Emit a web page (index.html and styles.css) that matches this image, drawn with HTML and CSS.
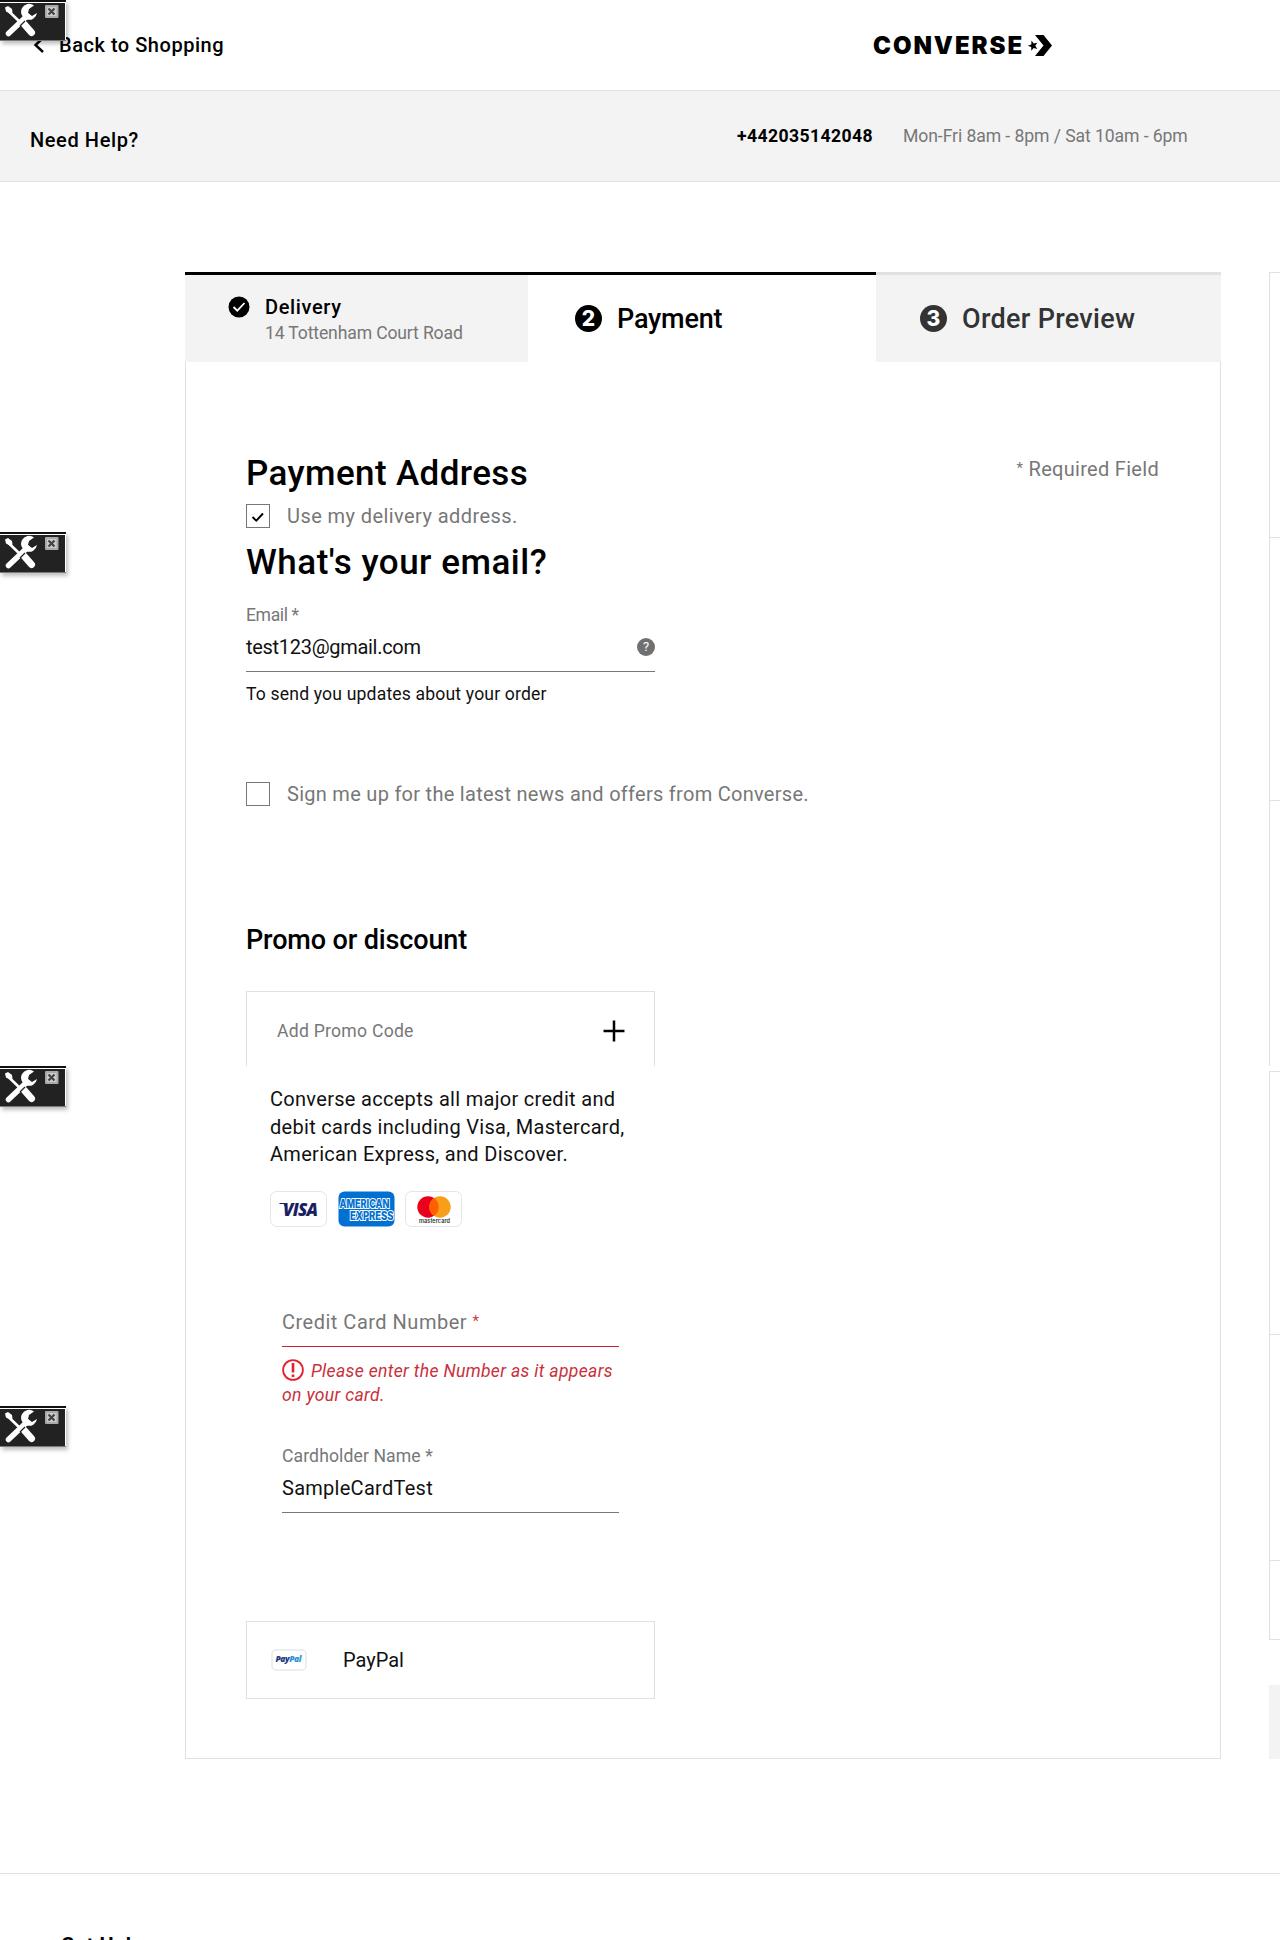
FILE: index.html
```html
<!DOCTYPE html>
<html lang="en">
<head>
<meta charset="utf-8">
<title>Converse Checkout</title>
<link rel="stylesheet" href="styles.css">
</head>
<body>
<svg class="defs" aria-hidden="true">
  <symbol id="tools" viewBox="0 0 66 41">
    <rect width="66" height="41" fill="#fff"/>
    <rect width="66" height="2" fill="#111"/>
    <rect y="3" width="65" height="37" fill="#222"/>
    <rect y="40.4" width="66" height=".6" fill="#222"/>
    <path d="M7 9.500 22 24" stroke="#fff" stroke-width="2.600"/>
    <path d="M5 7.500 8 6l4 3 .5 3.500-2.500 1L6 11.500z" fill="#fff"/>
    <path d="M24.500 24.500 31.500 32.500" stroke="#fff" stroke-width="7" stroke-linecap="round"/>
    <path d="M8.500 33.500 27 16" stroke="#fff" stroke-width="5.500" stroke-linecap="round"/>
    <path d="M34 5.500A8 8 0 1 0 37 13l-5 3-4-3 1-4z" fill="#fff"/>
    <path d="m20 26 5-5" stroke="#222" stroke-width="1.200"/>
    <rect x="45" y="5" width="13.500" height="13" rx="1" fill="#aaa"/>
    <rect x="47" y="7" width="9.500" height="9" fill="#ccc"/>
    <path d="m48.500 8.500 6 6m0-6-6 6" stroke="#444" stroke-width="2.200"/>
  </symbol>
</svg>

<header class="header">
  <a class="back">
    <svg class="back-arrow" viewBox="0 0 12 18"><path d="M10 2 2.500 9 10 16" fill="none" stroke="#000" stroke-width="2.400"/></svg>
    <span>Back to Shopping</span>
  </a>
  <div class="logo">
    <span class="logo-word">CONVERSE</span>
    <svg class="logo-mark" viewBox="0 0 26 22">
      <path d="M8 0h8.500L25 10.500 16.500 21H8l8.500-10.500z"/>
      <path d="m4.500 5.500 2.200 3 3.600-.7-2 3 2 3.200-3.600-.9-2.400 2.700-.1-3.700L.8 10.800l3.500-1.400z"/>
    </svg>
  </div>
</header>

<section class="help">
  <h2 class="help-title">Need Help?</h2>
  <span class="phone">+442035142048</span>
  <span class="hours">Mon-Fri 8am - 8pm / Sat 10am - 6pm</span>
</section>

<div class="checkout">
  <main class="main">
    <nav class="steps">
      <div class="step done">
        <svg class="step-check" viewBox="0 0 22 22"><circle cx="11" cy="11" r="10.500"/><path d="m5.500 11 3.800 3.700L16.500 7" fill="none" stroke="#fff" stroke-width="1.800"/></svg>
        <div>
          <div class="step-name">Delivery</div>
          <div class="step-detail">14 Tottenham Court Road</div>
        </div>
      </div>
      <div class="step current"><span class="num">2</span><span>Payment</span></div>
      <div class="step next"><span class="num">3</span><span>Order Preview</span></div>
    </nav>

    <div class="panel">
      <div class="panel-head">
        <h1 class="title title-address">Payment Address</h1>
        <span class="required"><span class="mark">*</span> Required Field</span>
      </div>
      <label class="check check-address">
        <span class="box"><svg viewBox="0 0 22 22"><path d="m5.500 12 3.800 3.700L16 8.500" fill="none" stroke="#000" stroke-width="1.900"/></svg></span>
        <span class="check-text">Use my delivery address.</span>
      </label>
      <h1 class="title title-email">What's your email?</h1>

      <div class="field email">
        <div class="label label-email">Email *</div>
        <div class="value"><span class="email-text">test123@gmail.com</span><span class="hint">?</span></div>
      </div>
      <p class="note">To send you updates about your order</p>
      <label class="check check-news">
        <span class="box"></span>
        <span class="check-text">Sign me up for the latest news and offers from Converse.</span>
      </label>

      <h2 class="promo-title">Promo or discount</h2>
      <div class="promo">
        <span>Add Promo Code</span>
        <svg class="plus" viewBox="0 0 22 22"><path d="M11 .5v21M.5 11h21" stroke="#000" stroke-width="2.500"/></svg>
      </div>

      <p class="accepts">Converse accepts all major credit and<br>debit cards including Visa, Mastercard,<br>American Express, and Discover.</p>
      <div class="cards">
        <svg class="card" viewBox="0 0 57 36">
          <rect x=".5" y=".5" width="56" height="35" rx="6" fill="#fff" stroke="#e4e4ea"/>
          <path d="M9.500 12.500h4.500l2 4" fill="none" stroke="#1a1f62" stroke-width="1.200"/>
          <text class="visa" x="13" y="25" textLength="35">VISA</text>
        </svg>
        <svg class="card" viewBox="0 0 57 36">
          <rect x=".5" y=".5" width="56" height="35" rx="6" fill="#0070d1"/>
          <text class="amex" x="1.500" y="16.500" textLength="50" lengthAdjust="spacingAndGlyphs">AMERICAN</text>
          <text class="amex" x="12" y="29" textLength="43.500" lengthAdjust="spacingAndGlyphs">EXPRESS</text>
        </svg>
        <svg class="card" viewBox="0 0 57 36">
          <rect x=".5" y=".5" width="56" height="35" rx="6" fill="#fff" stroke="#e4e4ea"/>
          <circle cx="23" cy="16" r="10.700" fill="#eb001b"/>
          <circle cx="35" cy="16" r="10.700" fill="#f79e1b"/>
          <path d="M29 7.100a10.700 10.700 0 0 1 0 17.800 10.700 10.700 0 0 1 0-17.800z" fill="#ff5f00"/>
          <text class="mc" x="14" y="31.500" textLength="31">mastercard</text>
        </svg>
      </div>

      <div class="card-form">
        <div class="field number">
          <div class="value"><span class="number-text">Credit Card Number <span class="mark star">*</span></span></div>
        </div>
        <p class="error"><svg class="alert" viewBox="0 0 22 22"><circle cx="11" cy="11" r="9.900" fill="none" stroke="#e5202b" stroke-width="1.800"/><path d="M11 4v9.500M11 15.500V18" stroke="#e5202b" stroke-width="2.600"/></svg><span>Please enter the Number as it appears</span><br>on your card.</p>
        <div class="field holder">
          <div class="label">Cardholder Name *</div>
          <div class="value"><span class="holder-text">SampleCardTest</span></div>
        </div>
      </div>

      <div class="paypal">
        <svg class="paypal-badge" viewBox="0 0 36 22">
          <rect x="1" y="1" width="34" height="20" rx="4" fill="#fff" stroke="#e8e9ee" stroke-width="1.500"/>
          <text class="pp" x="4.500" y="13" textLength="26"><tspan fill="#253b80">Pay</tspan><tspan fill="#2f94d8">Pal</tspan></text>
        </svg>
        <span>PayPal</span>
      </div>
    </div>
  </main>

  <aside class="summary">
    <div class="sum s1"></div>
    <div class="sum s2"></div>
    <div class="sum s3"></div>
    <div class="sum s4"></div>
    <div class="sum s5"></div>
    <div class="sum s6"></div>
    <div class="sum-block"></div>
  </aside>
</div>

<footer class="footer"><h3 class="footer-title">Get Help</h3></footer>

<svg class="widget w1"><use href="#tools"/></svg>
<svg class="widget w2"><use href="#tools"/></svg>
<svg class="widget w3"><use href="#tools"/></svg>
<svg class="widget w4"><use href="#tools"/></svg>
</body>
</html>
```
FILE: styles.css
```css
* { box-sizing: border-box; }
html, body { height: 1940px; overflow: hidden; }
body {
  margin: 0;
  position: relative;
  background: #fff;
  color: #111;
  font: 400 20px/24px Roboto, "Liberation Sans", sans-serif;
}
h1, h2, h3, p { margin: 0; font-weight: 500; }
svg { display: block; flex: none; }
.defs { position: absolute; width: 0; height: 0; }

.header { height: 90px; display: flex; align-items: flex-start; color: #000; }
.back { display: flex; width: 873px; padding: 33px 0 0 33px; font-weight: 500; letter-spacing: .53px; }
.back-arrow { width: 12px; height: 18px; margin: 3px 14px 0 0; }
.logo { display: flex; padding-top: 35px; }
.logo-word { width: 154px; font: 900 24px/22px Inter, sans-serif; letter-spacing: 1.950px; }
.logo-mark { width: 26px; height: 22px; }

.help {
  height: 92px;
  display: flex;
  align-items: flex-start;
  padding-left: 30px;
  background: #f3f3f3;
  border-top: 1px solid #e1e1e1;
  border-bottom: 1px solid #e1e1e1;
  font-size: 17.600px;
}
.help-title { width: 707px; padding-top: 37px; color: #000; font-size: 20px; line-height: 24px; letter-spacing: .6px; }
.phone { width: 166px; padding-top: 33px; color: #000; font-weight: 700; letter-spacing: .4px; }
.hours { padding-top: 33px; color: #777; letter-spacing: -.08px; }

.checkout { display: flex; gap: 48px; margin: 90px 0 0 185px; }
.main { width: 1036px; flex: none; }
.steps { display: grid; grid-template-columns: 343px 348px 345px; height: 90px; }
.step { display: flex; border-top: 3px solid #000; color: #000; font-size: 27px; font-weight: 500; }
.done { background: #f3f3f3; padding: 20px 0 0 43px; }
.step-check { width: 22px; height: 22px; margin: 1px 15px 0 0; }
.step-name { font-size: 20px; line-height: 24px; letter-spacing: .65px; }
.step-detail { margin-top: 2px; color: #777; font-size: 17.600px; font-weight: 400; letter-spacing: -.15px; }
.current, .next { align-items: center; gap: 15px; padding-left: 47px; }
.current { letter-spacing: -.2px; }
.next { padding-left: 44px; background: #f3f3f3; border-color: #e1e1e1; color: #333; letter-spacing: .3px; }
.num {
  width: 27px;
  height: 27px;
  border-radius: 50%;
  background: currentColor;
  text-align: center;
  font: 800 21px/27px Inter, sans-serif;
  letter-spacing: 0;
}
.num::first-letter { color: #fff; }

.panel {
  height: 1397px;
  padding: 92px 61px 0 60px;
  border: solid #e1e1e1;
  border-width: 0 1px 1px;
}
.panel-head { display: flex; justify-content: space-between; height: 40px; }
.title { color: #000; font-size: 35px; line-height: 40px; font-weight: 500; }
.title-address { letter-spacing: .38px; }
.title-email { margin-top: 15px; letter-spacing: .5px; }
.required { color: #777; line-height: 30px; letter-spacing: .3px; }
.mark { font-size: 15px; vertical-align: 3px; line-height: 1; }
.check { display: flex; gap: 17px; height: 24px; color: #777; line-height: 24px; }
.check-address { margin-top: 10px; letter-spacing: .42px; }
.check-news { margin-top: 78px; letter-spacing: .28px; }
.box { width: 24px; height: 24px; border: 1px solid #777; }

.field { border-bottom: 1px solid #777; }
.email { width: 409px; margin-top: 22px; }
.label { color: #777; font-size: 17.600px; line-height: 20px; letter-spacing: .1px; }
.label-email { letter-spacing: -.4px; }
.value { display: flex; justify-content: space-between; align-items: center; padding: 10px 0 12px; }
.email-text { letter-spacing: -.3px; }
.hint {
  width: 18px;
  height: 18px;
  border-radius: 50%;
  background: #707070;
  color: #fff;
  text-align: center;
  font-size: 13px;
  line-height: 18px;
}
.note { margin-top: 12px; font-size: 17.600px; line-height: 20px; font-weight: 400; letter-spacing: .16px; }

.promo-title { margin-top: 118px; color: #000; font-size: 27px; line-height: 32px; letter-spacing: -.13px; }
.promo {
  display: flex;
  align-items: center;
  justify-content: space-between;
  width: 409px;
  height: 75px;
  margin-top: 35px;
  padding: 4px 29px 0 30px;
  border: 1px solid #e1e1e1;
  border-bottom: 0;
  color: #777;
  font-size: 17.600px;
  letter-spacing: .25px;
}
.plus { width: 22px; height: 22px; }
.accepts { margin: 20px 0 0 24px; font-weight: 400; line-height: 27.500px; letter-spacing: .3px; }
.cards { display: flex; gap: 10.500px; margin: 22px 0 0 24px; }
.card { width: 57px; height: 36px; }
.visa { font: italic 900 17px "Open Sans", sans-serif; fill: #1a1f62; }
.amex { font: 800 11.500px Inter, sans-serif; fill: #0070d1; stroke: #fff; stroke-width: 2px; paint-order: stroke; }
.mc { font: 600 5.500px Inter, sans-serif; fill: #333; }

.card-form { width: 337px; margin: 73px 0 0 36px; }
.number { border-color: #c8232f; color: #777; letter-spacing: .5px; }
.number .value { padding-bottom: 12px; }
.star { color: #d8323f; }
.error { margin-top: 12px; color: #c9303c; font-size: 17.600px; font-style: italic; font-weight: 400; line-height: 24px; letter-spacing: .32px; }
.alert { display: inline-block; width: 22px; height: 22px; margin-right: 7px; vertical-align: -4px; }
.holder { margin-top: 39px; }
.holder-text { letter-spacing: .27px; }

.paypal {
  display: flex;
  align-items: center;
  width: 409px;
  height: 78px;
  margin-top: 108px;
  padding-left: 24px;
  border: 1px solid #e1e1e1;
}
.paypal-badge { width: 36px; height: 22px; margin-right: 36px; }
.pp { font: italic 800 8.500px "Open Sans", sans-serif; }

.summary { width: 11px; overflow: hidden; }
.sum { width: 300px; border: solid #e1e1e1; border-width: 1px 0 0 1px; }
.s1 { height: 265px; }
.s2 { height: 263px; }
.s3 { height: 266px; }
.s4 { height: 263px; margin-top: 5px; }
.s5 { height: 226px; }
.s6 { height: 80px; border-bottom-width: 1px; }
.sum-block { height: 74px; margin-top: 45px; background: #f3f3f3; }

.footer { margin-top: 114px; padding: 59px 0 0 61px; border-top: 1px solid #e1e1e1; }
.footer-title { color: #000; font-size: 20px; line-height: 24px; font-weight: 700; letter-spacing: .6px; }

.widget { position: absolute; left: 0; width: 66px; height: 41px; box-shadow: 2px 3px 4px rgba(0, 0, 0, .25); }
.w1 { top: 0; }
.w2 { top: 532px; }
.w3 { top: 1066px; }
.w4 { top: 1406px; }
```
